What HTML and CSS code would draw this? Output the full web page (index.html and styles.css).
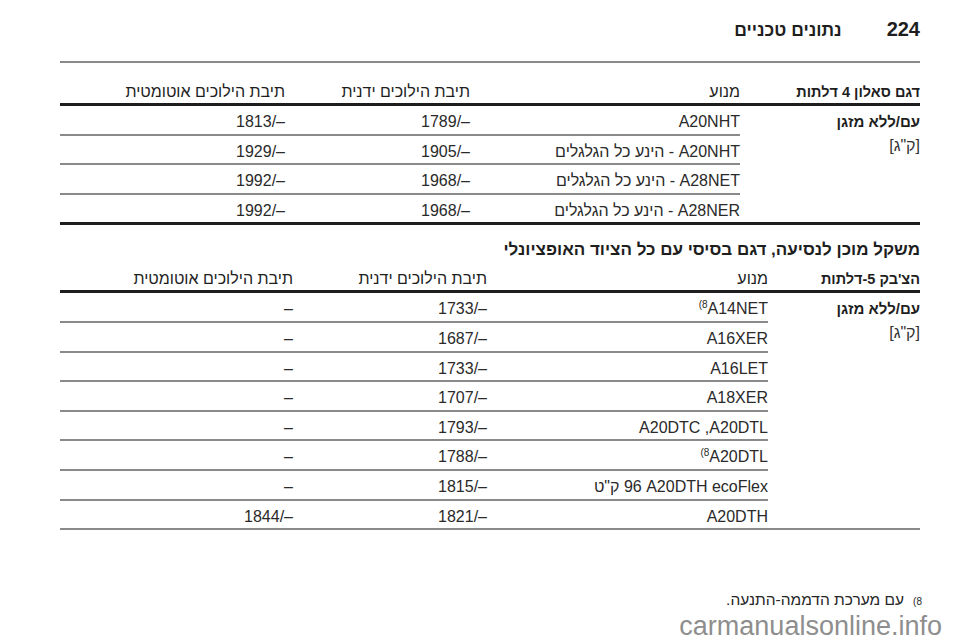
FILE: index.html
```html
<!DOCTYPE html>
<html lang="he" dir="rtl">
<head>
<meta charset="utf-8">
<title>נתונים טכניים</title>
<link rel="stylesheet" href="styles.css">
</head>
<body>
<div class="page">
  <header class="page-head">
    <span class="page-num">224</span>
    <span class="page-title">נתונים טכניים</span>
  </header>

  <section class="spec spec-sedan">
    <div class="thead">
      <div class="th th-label">דגם סאלון 4 דלתות</div>
      <div class="th">מנוע</div>
      <div class="th">תיבת הילוכים ידנית</div>
      <div class="th">תיבת הילוכים אוטומטית</div>
    </div>
    <div class="tbody">
      <div class="row-label">
        <b>עם/ללא מזגן</b>
        <span>[ק"ג]</span>
      </div>
      <div class="rows">
        <div class="row"><div class="td">A20NHT</div><div class="td num">–/1789</div><div class="td num">–/1813</div></div>
        <div class="row"><div class="td">A20NHT - הינע כל הגלגלים</div><div class="td num">–/1905</div><div class="td num">–/1929</div></div>
        <div class="row"><div class="td">A28NET - הינע כל הגלגלים</div><div class="td num">–/1968</div><div class="td num">–/1992</div></div>
        <div class="row"><div class="td">A28NER - הינע כל הגלגלים</div><div class="td num">–/1968</div><div class="td num">–/1992</div></div>
      </div>
    </div>
  </section>

  <h2 class="section-title">משקל מוכן לנסיעה, דגם בסיסי עם כל הציוד האופציונלי</h2>

  <section class="spec spec-hatch">
    <div class="thead">
      <div class="th th-label">הצ'בק 5-דלתות</div>
      <div class="th">מנוע</div>
      <div class="th">תיבת הילוכים ידנית</div>
      <div class="th">תיבת הילוכים אוטומטית</div>
    </div>
    <div class="tbody">
      <div class="row-label">
        <b>עם/ללא מזגן</b>
        <span>[ק"ג]</span>
      </div>
      <div class="rows">
        <div class="row"><div class="td"><span dir="ltr"><sup>(8</sup>A14NET</span></div><div class="td num">–/1733</div><div class="td num">–</div></div>
        <div class="row"><div class="td">A16XER</div><div class="td num">–/1687</div><div class="td num">–</div></div>
        <div class="row"><div class="td">A16LET</div><div class="td num">–/1733</div><div class="td num">–</div></div>
        <div class="row"><div class="td">A18XER</div><div class="td num">–/1707</div><div class="td num">–</div></div>
        <div class="row"><div class="td"><span dir="ltr">A20DTC ,A20DTL</span></div><div class="td num">–/1793</div><div class="td num">–</div></div>
        <div class="row"><div class="td"><span dir="ltr"><sup>(8</sup>A20DTL</span></div><div class="td num">–/1788</div><div class="td num">–</div></div>
        <div class="row"><div class="td"><span dir="ltr"><span dir="rtl">ק"ט</span> 96 A20DTH ecoFlex</span></div><div class="td num">–/1815</div><div class="td num">–</div></div>
        <div class="row"><div class="td">A20DTH</div><div class="td num">–/1821</div><div class="td num">–/1844</div></div>
      </div>
    </div>
  </section>

  <p class="footnote"><sup class="fn-mark">8)</sup><span>עם מערכת הדממה-התנעה.</span></p>
</div>
<div class="watermark" dir="ltr">carmanualsonline.info</div>
</body>
</html>
```

FILE: styles.css
```css
* {
  box-sizing: border-box;
  margin: 0;
  padding: 0;
}

html, body {
  background: #ffffff;
}

body {
  width: 960px;
  height: 642px;
  overflow: hidden;
  position: relative;
  font-family: "Liberation Sans", Arial, "DejaVu Sans", sans-serif;
  color: #262626;
}

.page {
  padding: 17px 40px 0 60px;
}

/* page header */
.page-head {
  display: flex;
  align-items: baseline;
  gap: 45px;
  font-size: 20px;
  line-height: 24px;
  font-weight: bold;
  color: #1e1e1e;
  padding-bottom: 19px;
  border-bottom: 2px solid #8a8a8a;
}

.page-title {
  font-size: 17.5px;
}

/* tables */
.spec {
  font-size: 16px;
  line-height: 18px;
}

.thead {
  display: grid;
  font-size: 16px;
  line-height: 18px;
  padding-bottom: 2px;
  border-bottom: 3px solid #1e1e1e;
  color: #1e1e1e;
}

.th-label {
  font-weight: bold;
  font-size: 14.5px;
}

.tbody {
  display: flex;
}

.row-label {
  display: flex;
  flex-direction: column;
  padding-top: 3.5px;
  line-height: 24px;
  color: #1e1e1e;
}

.row-label b {
  font-size: 15px;
}

.row-label span {
  color: #333;
}

.rows {
  flex: 1;
}

.row {
  display: grid;
  padding: 7px 0 2.6px;
  border-bottom: 2px solid #8a8a8a;
  color: #2a2a2a;
}

.row:last-child {
  border-bottom: none;
}

.td {
  white-space: nowrap;
}

sup {
  font-size: 10px;
  line-height: 0;
  vertical-align: 6px;
}

.spec-sedan {
  margin-top: 20px;
}

.spec-sedan .thead {
  grid-template-columns: 180px 270px 185px 1fr;
}

.spec-sedan .row-label {
  width: 180px;
}

.spec-sedan .row {
  grid-template-columns: 270px 185px 1fr;
}

.spec-sedan .tbody {
  border-bottom: 3px solid #1e1e1e;
}

.spec-hatch {
  margin-top: 10px;
}

.spec-hatch .thead {
  grid-template-columns: 152px 281px 194px 1fr;
}

.spec-hatch .row-label {
  width: 152px;
}

.spec-hatch .row {
  grid-template-columns: 281px 194px 1fr;
}

.spec-hatch .tbody {
  border-bottom: 2px solid #8a8a8a;
}

.section-title {
  margin-top: 15px;
  font-size: 17px;
  line-height: 20px;
  font-weight: bold;
  color: #1e1e1e;
}

/* footnote */
.footnote {
  margin-top: 61px;
  display: flex;
  align-items: baseline;
  gap: 9px;
  font-size: 15.5px;
  line-height: 18px;
  color: #262626;
  margin-right: -2px;
}

.fn-mark {
  font-size: 10px;
  vertical-align: 6px;
}

.watermark {
  position: absolute;
  right: 18px;
  bottom: 0;
  font-family: "Liberation Sans", Arial, sans-serif;
  font-size: 27px;
  line-height: 32px;
  color: #8e8e8e;
}
```
